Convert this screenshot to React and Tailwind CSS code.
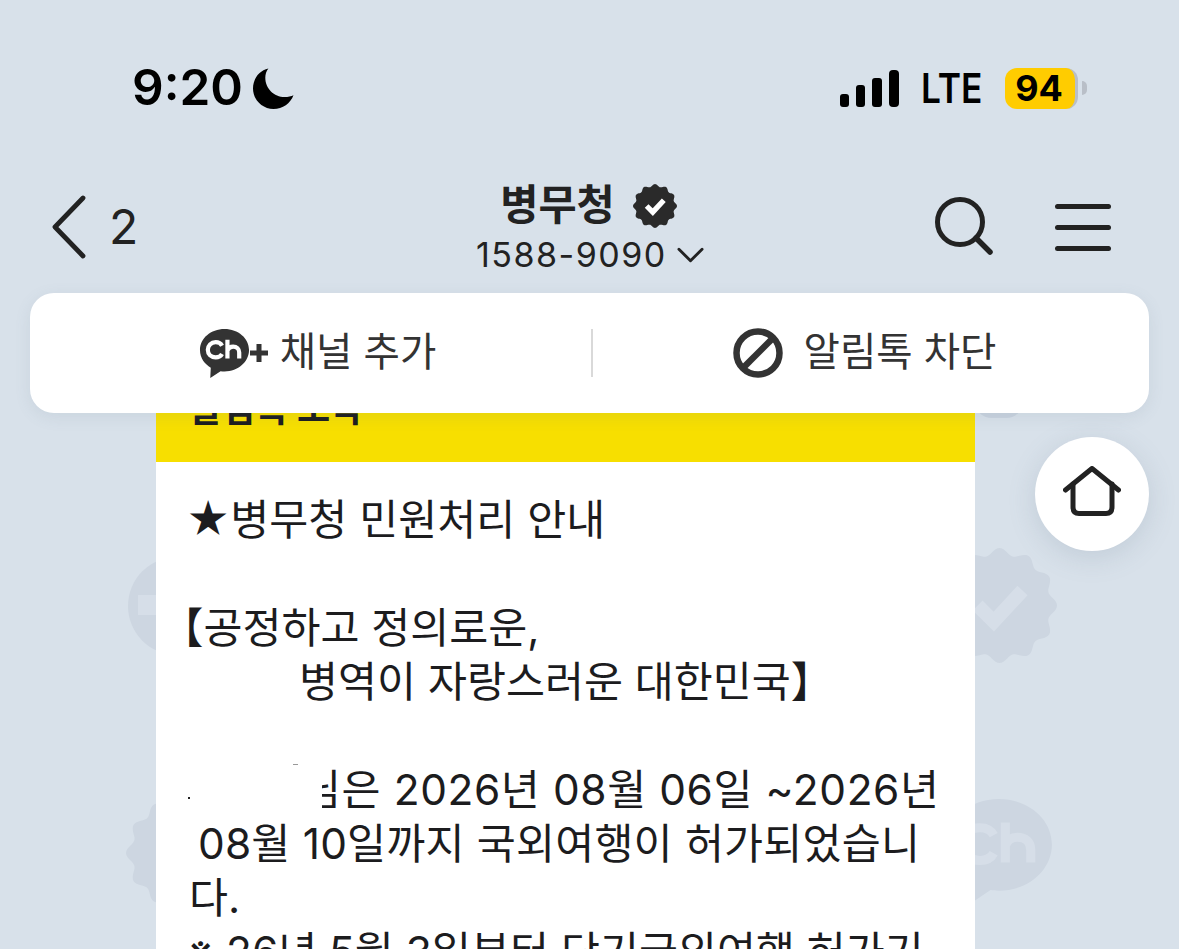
import React from "react";

const stack = "[font-family:Inter,'Noto_Sans_CJK_KR',sans-serif]";

function Badge({ className, fill = "#2a2a2a", check = "#ffffff" }) {
  const pts = [];
  const n = 180;
  for (let i = 0; i < n; i++) {
    const a = (i / n) * Math.PI * 2;
    const r = 47 + 3 * Math.cos(a * 12);
    pts.push(`${(50 + r * Math.cos(a)).toFixed(1)},${(50 + r * Math.sin(a)).toFixed(1)}`);
  }
  return (
    <svg viewBox="0 0 100 100" className={className}>
      <polygon points={pts.join(" ")} fill={fill} />
      <path d="M31 50 L45 64 L70 37" fill="none" stroke={check} strokeWidth="12" />
    </svg>
  );
}

function ChIcon({ className, fill = "#333333", text = "#ffffff" }) {
  return (
    <svg viewBox="0 0 52 52" className={className}>
      <path d="M26 1C12 1 1 10.500 1 22.500C1 31 6 37 12 40.500L11.500 51L22 44C23.500 44.200 24.700 44.300 26 44.300C40 44.300 51 34.500 51 22.500C51 10.500 40 1 26 1Z" fill={fill} />
      <path d="M23.500 18C22.300 15.800 20 14.500 17 14.500C12.300 14.500 9 17.800 9 22.300C9 26.800 12.300 30 17 30C20 30 22.300 28.800 23.500 26.600" fill="none" stroke={text} strokeWidth="4.300" />
      <path d="M29 12V31M29 23C30 20.300 32 19 34.800 19C38.500 19 41 21.200 41 25V31" fill="none" stroke={text} strokeWidth="4.300" />
    </svg>
  );
}

const lines = [
  { t: "★병무청 민원처리 안내", c: "-ml-[3px]" },
  { t: "" },
  { t: "【공정하고 정의로운,", c: "-ml-[28px]" },
  { t: "병역이 자랑스러운 대한민국】", c: "pl-[110px]" },
  { t: "" },
  { redact: true },
  { t: "08월 10일까지 국외여행이 허가되었습니", c: "pl-[9px] tracking-[0.2px]" },
  { t: "다." },
  { t: "※ 26년 5월 3일부터 단기국외여행 허가기", c: "-ml-[2px]" },
];

export default function App() {
  return (
    <div className={`relative h-[949px] w-[1179px] overflow-hidden bg-[#d8e1ea] ${stack} text-[#1c1c1e]`}>
      {/* Watermark pattern behind the chat */}
      <svg viewBox="0 0 110 100" className="absolute left-[127px] top-[556px] h-[100px] w-[110px]">
        <circle cx="50" cy="50" r="49" fill="#cdd6e1" />
        <rect x="11" y="39" width="90" height="20" fill="#d6dee8" />
      </svg>
      <Badge className="absolute left-[126px] top-[797px] h-[112px] w-[112px]" fill="#cdd6e1" check="#d6dee8" />
      <Badge className="absolute left-[942px] top-[548px] h-[115px] w-[115px]" fill="#cdd6e1" check="#d6dee8" />
      <ChIcon className="absolute left-[944px] top-[796px] h-[112px] w-[110px]" fill="#cdd6e1" text="#d6dee8" />
      <div className="absolute left-[975px] top-[385px] h-[33px] w-[48px] rounded-full bg-[#c9d3df]" />

      {/* Status bar */}
      <div className="flex h-[176px] items-start pt-[64px]">
        <div className="ml-[132px] flex h-[48px] items-center">
          <span className="text-[49.500px] font-semibold leading-none text-black">9:20</span>
          <svg viewBox="0 0 40 40" className="ml-[10px] h-[41px] w-[41px]">
            <path d="M15 0.500C6 2.500 0 10.500 0 20C0 31 9 40 20 40C29 40 36.500 34.500 39.500 26.500C37.500 27.500 34 28.300 31 28.300C20.500 28.300 12 20 12 9.500C12 6 13 3 15 0.500Z" fill="#000" />
          </svg>
        </div>
        <div className="ml-auto mr-[92px] flex h-[48px] items-center">
          <div className="flex items-end gap-[7px]">
            <div className="h-[13px] w-[9px] rounded-[3px] bg-black" />
            <div className="h-[22px] w-[9px] rounded-[3px] bg-black" />
            <div className="h-[29px] w-[10px] rounded-[3px] bg-black" />
            <div className="h-[37px] w-[10px] rounded-[4px] bg-black" />
          </div>
          <span className="ml-[22px] inline-block w-[58px] origin-left scale-x-[0.86] whitespace-nowrap text-[41px] font-semibold leading-none text-black">LTE</span>
          <div className="ml-[26px] flex h-[41px] w-[73px] items-center justify-center rounded-[12px] border-r-[3px] border-[#b9bfc8] bg-[#ffcc00] pr-[2px] text-[36px] font-bold leading-none text-black">
            94
          </div>
          <div className="ml-[4px] h-[14px] w-[5px] rounded-r-full bg-[#b9bfc8]" />
        </div>
      </div>

      {/* Navigation header */}
      <div className="flex h-[117px] items-start">
        <div className="ml-[50px] mt-[19px] flex w-[426px] items-center">
          <svg viewBox="0 0 38 64" className="h-[64px] w-[38px]">
            <path d="M33 3 L5 32 L33 61" fill="none" stroke="#222" strokeWidth="4.800" strokeLinecap="round" strokeLinejoin="round" />
          </svg>
          <span className="ml-[21px] text-[48px] font-normal leading-none text-[#222]">2</span>
        </div>
        <div className="mt-[7px] flex w-[228px] flex-col items-center">
          <div className="mr-[3px] flex h-[46px] items-center">
            <span className="text-[41.500px] font-bold leading-none text-[#222]">병무청</span>
            <Badge className="ml-[18px] h-[44px] w-[44px]" />
          </div>
          <div className="mt-[6px] flex items-center self-start">
            <span className="text-[34px] leading-[40px] tracking-[1.500px] text-[#222]">1588-9090</span>
            <svg viewBox="0 0 28 16" className="ml-[10px] h-[16px] w-[27px]">
              <path d="M2 2 L14 14 L26 2" fill="none" stroke="#222" strokeWidth="3" strokeLinecap="round" strokeLinejoin="round" />
            </svg>
          </div>
        </div>
        <div className="ml-auto mr-[68px] mt-[21px] flex items-start gap-[62px]">
          <svg viewBox="0 0 58 58" className="h-[58px] w-[58px]">
            <circle cx="25" cy="25" r="22.500" fill="none" stroke="#222" strokeWidth="5" />
            <path d="M41 41 L55 55" stroke="#222" strokeWidth="5.500" strokeLinecap="round" />
          </svg>
          <div className="mt-[7px] flex h-[47px] w-[56px] flex-col justify-between">
            <div className="h-[5px] rounded-full bg-[#222]" />
            <div className="h-[5px] rounded-full bg-[#222]" />
            <div className="h-[5px] rounded-full bg-[#222]" />
          </div>
        </div>
      </div>

      {/* Chat content */}
      <div className="relative">
        <div className="ml-[156px] w-[819px] bg-white">
          <div className="flex h-[169px] items-end bg-[#f7df00] pb-[31px] pl-[33px] text-[36px] font-bold leading-[44px] text-[#1c1c1e]">
            알림톡 도착
          </div>
          <div className="pl-[33px] pt-[31px] text-[42.400px] leading-[54px] text-[#1c1c1e]">
            {lines.map((l, i) =>
              l.redact ? (
                <div key={i} className="relative h-[54px] whitespace-pre pl-[113px] tracking-[0.6px]">
                  님은 2026년 08월 06일 ~2026년
                  <div className="absolute left-[-6px] top-0 h-[54px] w-[139px] bg-white" />
                  <div className="absolute left-[-1px] top-[34px] h-[2px] w-[2px] bg-[#222]" />
                  <div className="absolute left-[104px] top-[1px] h-[1px] w-[5px] bg-[#999]" />
                </div>
              ) : (
                <div key={i} className={`h-[54px] whitespace-pre ${l.c || ""}`}>{l.t}</div>
              )
            )}
          </div>
        </div>

        {/* Notice bar over the chat */}
        <div className="absolute left-[30px] top-0 flex h-[120px] w-[1119px] items-center rounded-[24px] bg-white shadow-[0_4px_16px_rgba(100,120,140,0.12)]">
          <div className="flex h-full w-[561px] items-center justify-center pl-[14px] text-[39.500px] text-[#333]">
            <ChIcon className="h-[51px] w-[51px]" />
            <svg viewBox="0 0 18 18" className="h-[18px] w-[18px]">
              <path d="M9 0V18M0 9H18" stroke="#333" strokeWidth="5" />
            </svg>
            <span className="ml-[12px] leading-none">채널 추가</span>
          </div>
          <div className="h-[48px] w-[2px] bg-[#d9d9d9]" />
          <div className="flex h-full flex-1 items-center justify-center pr-[13px] text-[39.500px] text-[#333]">
            <svg viewBox="0 0 50 50" className="h-[50px] w-[50px]">
              <circle cx="25" cy="25" r="21.500" fill="none" stroke="#333" strokeWidth="6.500" />
              <path d="M10 40 L40 10" stroke="#333" strokeWidth="6.500" />
            </svg>
            <span className="ml-[21px] leading-none">알림톡 차단</span>
          </div>
        </div>

        {/* Floating home button */}
        <div className="absolute left-[1035px] top-[144px] flex h-[114px] w-[114px] items-center justify-center rounded-full bg-white shadow-[0_6px_28px_rgba(100,120,140,0.2)]">
          <svg viewBox="0 0 58 50" className="mb-[6px] h-[50px] w-[58px]">
            <path d="M2.500 24 L29 2.500 L55.500 24" fill="none" stroke="#222" strokeWidth="5" strokeLinecap="round" strokeLinejoin="round" />
            <path d="M10 18V41C10 45.500 12 47.500 16 47.500H43C47 47.500 49 45.500 49 41V18" fill="none" stroke="#222" strokeWidth="5" strokeLinecap="round" />
          </svg>
        </div>
      </div>
    </div>
  );
}
